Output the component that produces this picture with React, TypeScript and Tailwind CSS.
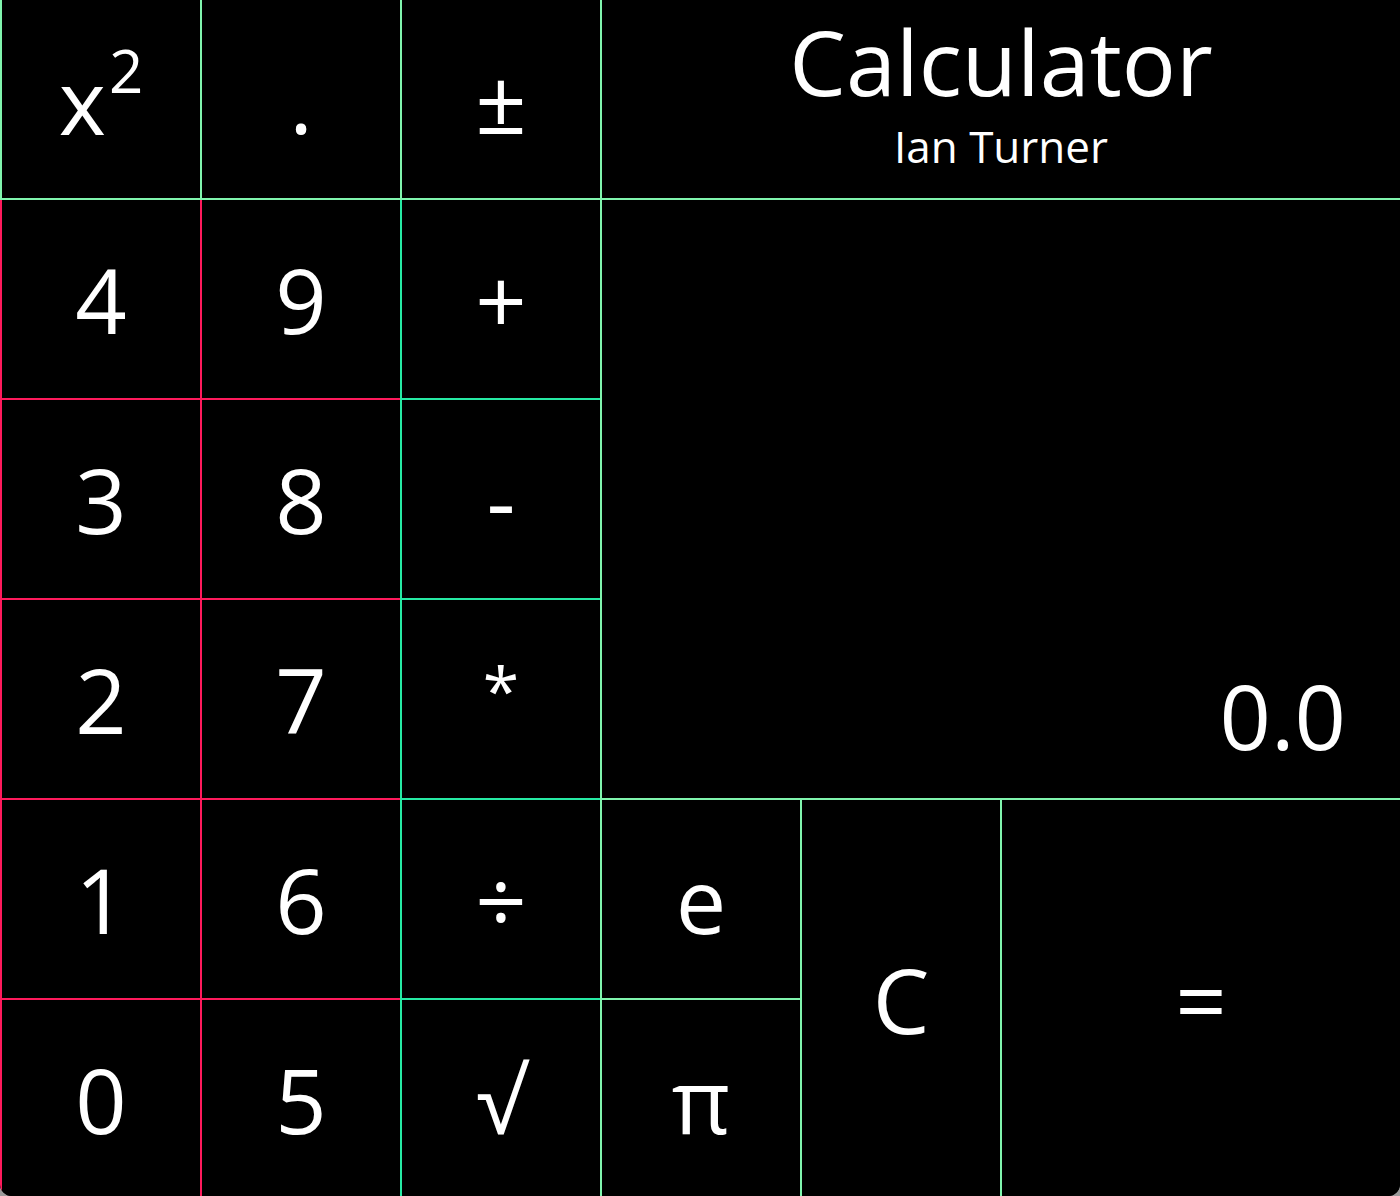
import React from 'react'

const mint = 'border-[#80f5ae]'
const teal = 'border-[#26eaa4]'
const pink = 'border-[#ff1a5c]'

function Key({ label, className = '' }: { label: React.ReactNode; className?: string }) {
  return (
    <button
      className={
        'flex items-center justify-center bg-black text-white border-l-2 border-b-2 leading-none text-[90px] outline-none ' +
        className
      }
    >
      {label}
    </button>
  )
}

export default function App() {
  return (
    <div className="w-[1400px] h-[1196px] bg-[#9a9a9a]">
      <div
        className="w-[1400px] h-[1196px] overflow-hidden rounded-b-[12px] bg-black"
        style={{ fontFamily: '"Open Sans", "Noto Sans", sans-serif' }}
      >
        <div className="grid grid-cols-[repeat(7,200px)] grid-rows-[repeat(6,200px)]">
          {/* top row */}
          <Key
            className={'col-start-1 row-start-1 ' + mint}
            label={
              <span className="pt-[2px]">
                x<span className="relative -top-[42px] text-[60px] ml-[3px]">2</span>
              </span>
            }
          />
          <Key className={'col-start-2 row-start-1 ' + mint} label="." />
          <Key className={'col-start-3 row-start-1 ' + mint} label="±" />
          <div
            className={
              'col-start-4 col-span-4 row-start-1 flex flex-col items-center bg-black text-white border-l-2 border-b-2 ' +
              mint
            }
          >
            <div className="text-[90px] leading-[90px] mt-[16px]">Calculator</div>
            <div className="text-[44px] leading-[44px] mt-[18px]">Ian Turner</div>
          </div>

          {/* numbers */}
          <Key className={'col-start-1 row-start-2 ' + pink} label="4" />
          <Key className={'col-start-2 row-start-2 ' + pink} label="9" />
          <Key className={'col-start-1 row-start-3 ' + pink} label="3" />
          <Key className={'col-start-2 row-start-3 ' + pink} label="8" />
          <Key className={'col-start-1 row-start-4 ' + pink} label="2" />
          <Key className={'col-start-2 row-start-4 ' + pink} label="7" />
          <Key className={'col-start-1 row-start-5 ' + pink} label="1" />
          <Key className={'col-start-2 row-start-5 ' + pink} label="6" />
          <Key className={'col-start-1 row-start-6 ' + pink} label="0" />
          <Key className={'col-start-2 row-start-6 ' + pink} label="5" />

          {/* operators */}
          <Key className={'col-start-3 row-start-2 ' + teal} label="+" />
          <Key className={'col-start-3 row-start-3 ' + teal} label="-" />
          <Key
            className={'col-start-3 row-start-4 ' + teal}
            label={<span className="text-[66px] pb-[20px]">*</span>}
          />
          <Key className={'col-start-3 row-start-5 ' + teal} label="÷" />
          <Key className={'col-start-3 row-start-6 ' + teal} label="√" />

          {/* display */}
          <div
            className={
              'col-start-4 col-span-4 row-start-2 row-span-3 flex items-end justify-end pr-[54px] pb-[38px] bg-black text-white border-l-2 border-b-2 ' +
              mint
            }
          >
            <span className="text-[90px] leading-none">0.0</span>
          </div>

          <Key className={'col-start-4 row-start-5 ' + mint} label="e" />
          <Key className={'col-start-4 row-start-6 ' + mint} label="π" />
          <Key className={'col-start-5 row-start-5 row-span-2 ' + mint} label="C" />
          <Key className={'col-start-6 col-span-2 row-start-5 row-span-2 ' + mint} label="=" />
        </div>
      </div>
    </div>
  )
}
